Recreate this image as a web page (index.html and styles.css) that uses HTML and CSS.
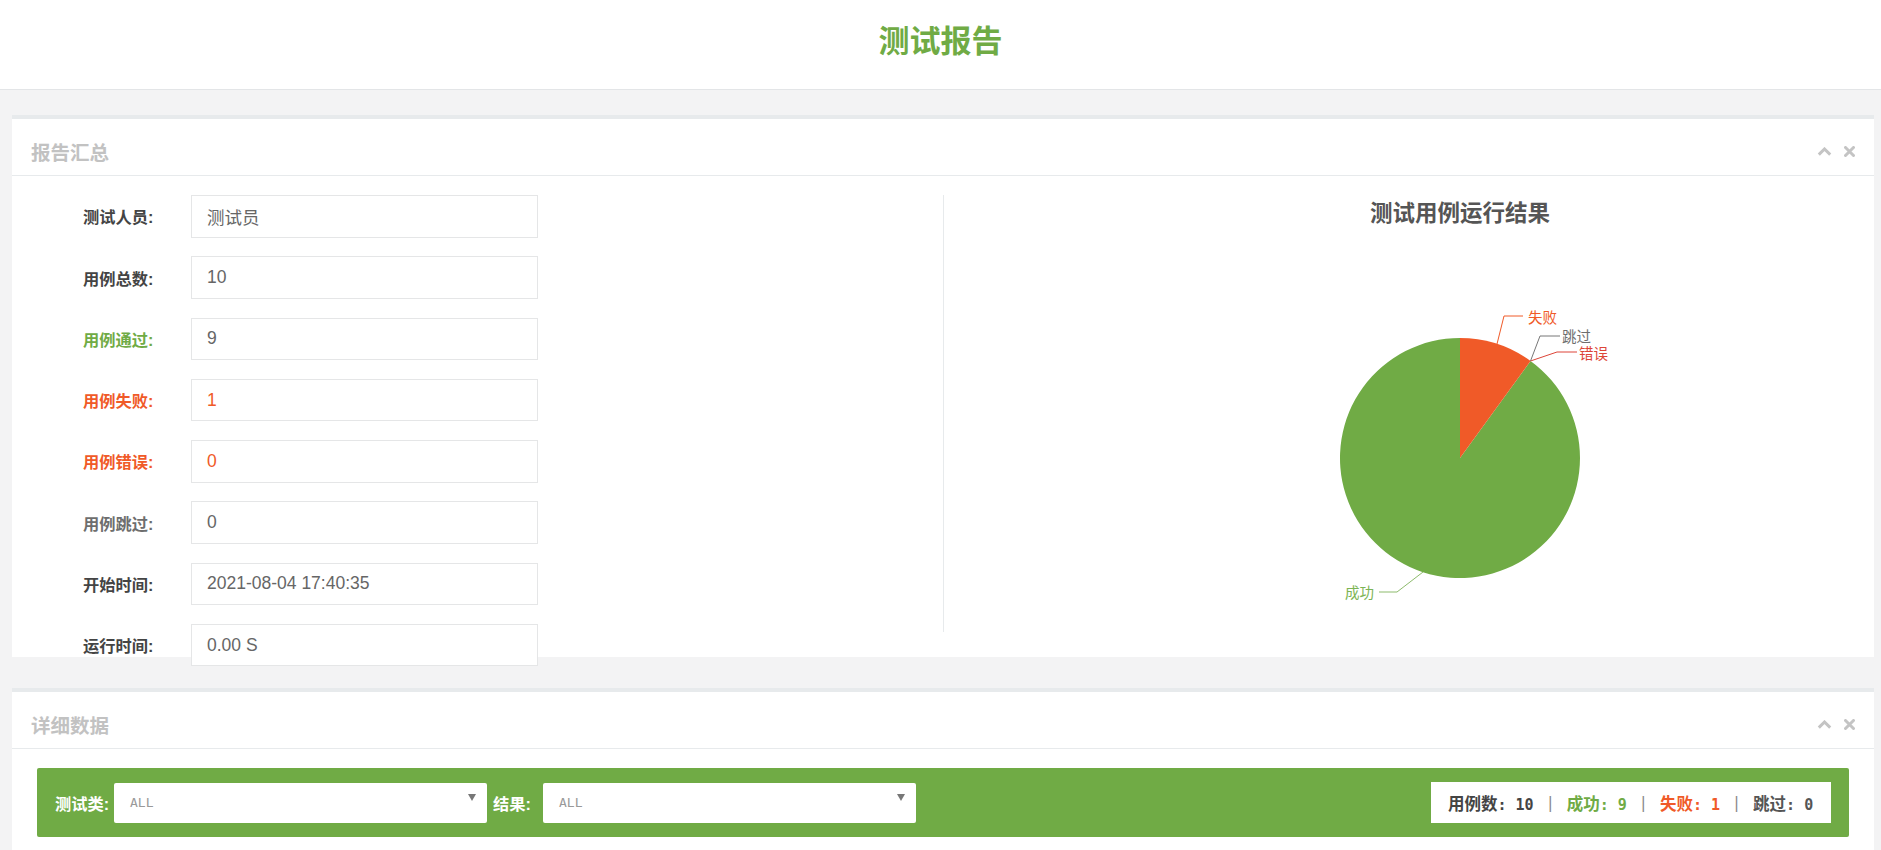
FILE: index.html
```html
<!DOCTYPE html>
<html lang="zh">
<head>
<meta charset="utf-8">
<title>测试报告</title>
<link rel="stylesheet" href="styles.css">
</head>
<body>
<header class="top">
  <h1 class="report-title">测试报告</h1>
</header>
<main class="wrapper">
  <section class="ibox">
    <div class="ibox-title">
      <h5>报告汇总</h5>
      <div class="tools">
        <svg class="ic-up" width="15" height="9" viewBox="0 0 15 9"><polyline points="1.8,7.6 7.5,2 13.2,7.6" fill="none" stroke="#c4c4c4" stroke-width="3"/></svg>
        <svg class="ic-x" width="11" height="11" viewBox="0 0 11 11"><path d="M1.5 1.5 L9.5 9.5 M9.5 1.5 L1.5 9.5" stroke="#c4c4c4" stroke-width="3" stroke-linecap="round"/></svg>
      </div>
    </div>
    <div class="ibox-content summary">
      <div class="col-left">
        <div class="form-row"><span class="lbl">测试人员:</span><div class="field">测试员</div></div>
        <div class="form-row"><span class="lbl">用例总数:</span><div class="field">10</div></div>
        <div class="form-row"><span class="lbl lbl-pass">用例通过:</span><div class="field">9</div></div>
        <div class="form-row"><span class="lbl lbl-fail">用例失败:</span><div class="field val-fail">1</div></div>
        <div class="form-row"><span class="lbl lbl-fail">用例错误:</span><div class="field val-fail">0</div></div>
        <div class="form-row"><span class="lbl lbl-skip">用例跳过:</span><div class="field">0</div></div>
        <div class="form-row"><span class="lbl">开始时间:</span><div class="field">2021-08-04 17:40:35</div></div>
        <div class="form-row"><span class="lbl">运行时间:</span><div class="field">0.00 S</div></div>
      </div>
      <div class="col-right">
        <svg class="chart" width="905" height="437" viewBox="0 0 905 437">
          <text class="chart-title" x="516" y="16" text-anchor="middle" dominant-baseline="central">测试用例运行结果</text>
          <path d="M516 263 L586.53 165.92 A120 120 0 1 1 516 143 Z" fill="#70ab45"/>
          <path d="M516 263 L516 143 A120 120 0 0 1 586.53 165.92 Z" fill="#f05a28"/>
          <polyline points="553,149 560,121 579,121" fill="none" stroke="#f05a28" stroke-width="1"/>
          <text class="pie-lbl" x="584" y="121" fill="#f05a28" dominant-baseline="central">失败</text>
          <polyline points="586.5,166 596,141 616,141" fill="none" stroke="#777" stroke-width="1"/>
          <text class="pie-lbl" x="618" y="140" fill="#6e6e6e" dominant-baseline="central">跳过</text>
          <polyline points="586.5,166 613,157 633,157" fill="none" stroke="#dd4538" stroke-width="1"/>
          <text class="pie-lbl" x="635" y="157" fill="#dd4538" dominant-baseline="central">错误</text>
          <polyline points="479,377 453,397 435,397" fill="none" stroke="#8dbb6c" stroke-width="1"/>
          <text class="pie-lbl" x="430" y="396" fill="#7cb454" text-anchor="end" dominant-baseline="central">成功</text>
        </svg>
      </div>
    </div>
  </section>

  <section class="ibox">
    <div class="ibox-title">
      <h5>详细数据</h5>
      <div class="tools">
        <svg class="ic-up" width="15" height="9" viewBox="0 0 15 9"><polyline points="1.8,7.6 7.5,2 13.2,7.6" fill="none" stroke="#c4c4c4" stroke-width="3"/></svg>
        <svg class="ic-x" width="11" height="11" viewBox="0 0 11 11"><path d="M1.5 1.5 L9.5 9.5 M9.5 1.5 L1.5 9.5" stroke="#c4c4c4" stroke-width="3" stroke-linecap="round"/></svg>
      </div>
    </div>
    <div class="ibox-content detail">
      <div class="filter-bar">
        <span class="f-label f-label-1">测试类:</span>
        <div class="select"><span class="sel-val">ALL</span><span class="caret"></span></div>
        <span class="f-label f-label-2">结果:</span>
        <div class="select"><span class="sel-val">ALL</span><span class="caret"></span></div>
        <div class="stats"><span class="s-total"><span class="cj">用例数</span>: 10</span><span class="sep"> | </span><span class="s-pass"><span class="cj">成功</span>: 9</span><span class="sep"> | </span><span class="s-fail"><span class="cj">失败</span>: 1</span><span class="sep"> | </span><span class="s-skip"><span class="cj">跳过</span>: 0</span></div>
      </div>
    </div>
  </section>
</main>
</body>
</html>
```

FILE: styles.css
```css
html, body {
  margin: 0;
  padding: 0;
}

body {
  background: #f3f3f4;
  font-family: "Liberation Sans", "Noto Sans CJK SC", sans-serif;
  color: #676a6c;
}

.top {
  background: #ffffff;
  height: 89px;
  border-bottom: 1px solid #e3e5e7;
  text-align: center;
}

.report-title {
  margin: 0;
  font-size: 31px;
  line-height: 83px;
  font-weight: bold;
  color: #70ab45;
}

.wrapper {
  padding: 25px 7px 0 12px;
}

.ibox {
  background: #ffffff;
  border-top: 4px solid #e7eaec;
}

.ibox + .ibox {
  margin-top: 31px;
}

.ibox-title {
  height: 57px;
  box-sizing: border-box;
  padding: 8px 19px 0 19px;
  display: flex;
  align-items: center;
  justify-content: space-between;
  border-bottom: 1px solid #e7eaec;
}

.ibox-title h5 {
  margin: 0;
  font-size: 19.5px;
  font-weight: bold;
  color: #c2c2c2;
}

.tools {
  display: flex;
  align-items: center;
  gap: 12px;
}

.ic-up, .ic-x {
  display: block;
}

/* summary panel */
.summary {
  display: flex;
  padding: 19px 25px 25px 25px;
  height: 437px;
}

.col-left {
  flex: 0 0 907px;
  box-sizing: border-box;
  height: 437px;
  padding-left: 46px;
  border-right: 1px solid #e7eaec;
}

.form-row {
  display: flex;
  align-items: center;
  height: 42.5px;
  margin-bottom: 18.75px;
}

.lbl {
  width: 108px;
  font-size: 16.25px;
  font-weight: bold;
  color: #444;
}

.lbl-pass {
  color: #70ab45;
}

.lbl-fail {
  color: #f05a28;
}

.lbl-skip {
  color: #6e6e6e;
}

.field {
  width: 347px;
  height: 42.5px;
  box-sizing: border-box;
  border: 1px solid #e5e6e7;
  background: #ffffff;
  padding: 0 15px;
  display: flex;
  align-items: center;
  font-size: 17.5px;
  color: #666;
}

.val-fail {
  color: #f05a28;
}

.col-right {
  flex: 1 1 auto;
  min-width: 0;
  height: 437px;
}

.chart {
  display: block;
  overflow: visible;
}

.chart-title {
  font-family: "Noto Sans CJK SC", sans-serif;
  font-size: 22.5px;
  font-weight: bold;
  fill: #555;
}

.pie-lbl {
  font-family: "Noto Sans CJK SC", sans-serif;
  font-size: 14.5px;
}

/* detail panel */
.detail {
  padding: 19px 25px;
  min-height: 300px;
}

.filter-bar {
  background: #70ab45;
  height: 69px;
  box-sizing: border-box;
  padding: 0 18px;
  display: flex;
  align-items: center;
  border-radius: 2px;
}

.f-label {
  color: #ffffff;
  font-size: 16.25px;
  font-weight: bold;
}

.f-label-1 {
  width: 59px;
}

.f-label-2 {
  width: 50px;
  margin-left: 6px;
}

.select {
  width: 373px;
  height: 40px;
  box-sizing: border-box;
  background: #ffffff;
  border-radius: 2px;
  padding: 0 11px 0 16px;
  display: flex;
  align-items: center;
  justify-content: space-between;
}

.sel-val {
  font-family: "DejaVu Sans Mono", monospace;
  font-size: 13px;
  color: #999;
}

.caret {
  align-self: flex-start;
  margin-top: 11px;
  width: 0;
  height: 0;
  border-left: 4px solid transparent;
  border-right: 4px solid transparent;
  border-top: 7px solid #777;
}

.stats {
  margin-left: auto;
  width: 400px;
  height: 41px;
  box-sizing: border-box;
  background: #ffffff;
  padding-left: 17px;
  display: flex;
  align-items: center;
  white-space: pre;
  font-family: "DejaVu Sans Mono", "Noto Sans CJK SC", monospace;
  font-size: 15px;
  font-weight: bold;
  color: #444;
}

.cj {
  font-family: "Noto Sans CJK SC", sans-serif;
  font-size: 16.5px;
}

.sep {
  color: #888;
  font-weight: normal;
  padding: 0 3px;
}

.s-pass {
  color: #70ab45;
}

.s-fail {
  color: #f05a28;
}

.s-skip {
  color: #555;
}
```
